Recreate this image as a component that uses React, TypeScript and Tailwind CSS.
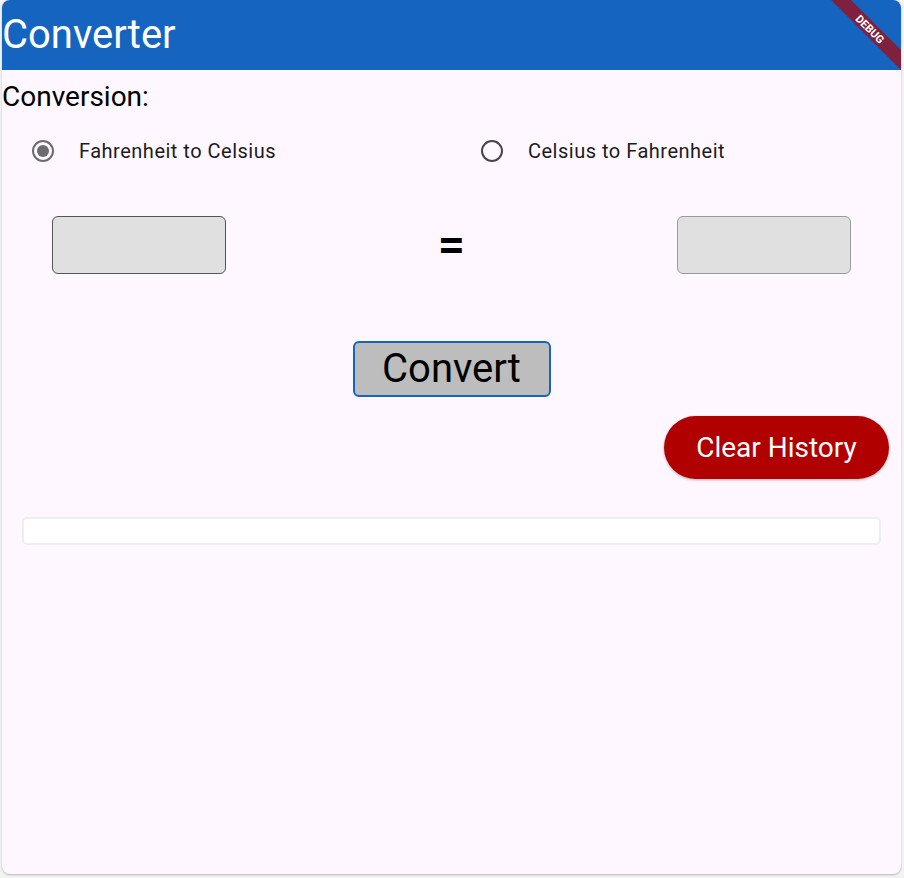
import React from "react";

function Radio({ checked }: { checked: boolean }) {
  return (
    <div className="w-[22px] h-[22px] rounded-full border-2 flex items-center justify-center shrink-0" style={{ borderColor: checked ? "#6d6a70" : "#49454f" }}>
      {checked && <div className="w-[12px] h-[12px] rounded-full bg-[#6d6a70]" />}
    </div>
  );
}

export default function App() {
  return (
    <div className="w-[904px] h-[878px] bg-[#f3f3f3] font-['Roboto',sans-serif]">
      <div className="relative ml-[2px] w-[899px] h-[874px] rounded-[8px] overflow-hidden bg-[#fef7ff] shadow-[0_1px_2px_rgba(0,0,0,0.25)] flex flex-col">
        <div className="h-[70px] bg-[#1565c0] flex items-center shrink-0">
          <span className="text-[40px] text-white leading-none mt-[-1px]">Converter</span>
        </div>
        <div className="absolute top-0 right-0 w-[70px] h-[70px] overflow-hidden">
          <div className="absolute left-[-21px] top-[22px] w-[120px] h-[14px] bg-[#80203f] rotate-45 flex items-center justify-center">
            <span className="text-[11px] font-bold text-white leading-none">DEBUG</span>
          </div>
        </div>
        <div className="text-[28px] text-black leading-none mt-[13px] h-[28px]">Conversion:</div>
        <div className="flex mt-[26px] h-[28px] shrink-0">
          <div className="w-[449px] flex items-center pl-[30px]">
            <Radio checked={true} />
            <span className="ml-[25px] text-[20px] leading-none tracking-[0.5px] text-[#1d1b20]">Fahrenheit to Celsius</span>
          </div>
          <div className="flex-1 flex items-center pl-[30px]">
            <Radio checked={false} />
            <span className="ml-[25px] text-[20px] leading-none tracking-[0.5px] text-[#1d1b20]">Celsius to Fahrenheit</span>
          </div>
        </div>
        <div className="flex items-center mt-[51px] h-[58px] shrink-0">
          <div className="w-[174px] h-[58px] ml-[50px] bg-[#e0e0e0] border border-[#555] rounded-[6px]" />
          <div className="flex-1 flex justify-center text-[48px] font-semibold leading-none text-black">=</div>
          <div className="w-[174px] h-[58px] mr-[50px] bg-[#e0e0e0] border border-[#9a9a9a] rounded-[6px]" />
        </div>
        <div className="flex justify-center mt-[67px]">
          <div className="w-[198px] h-[56px] bg-[#bdbdbd] border-2 border-[#1565c0] rounded-[6px] flex items-center justify-center text-[40px] leading-none text-black">
            Convert
          </div>
        </div>
        <div className="flex justify-end mt-[19px] pr-[12px]">
          <div className="w-[225px] h-[63px] rounded-full bg-[#b00000] shadow-[0_1px_3px_rgba(0,0,0,0.3)] flex items-center justify-center text-[28px] text-white leading-none">
            Clear History
          </div>
        </div>
        <div className="mx-[20px] mt-[38px] h-[28px] bg-white border-2 border-[#eeeef0] rounded-[5px]" />
      </div>
    </div>
  );
}
